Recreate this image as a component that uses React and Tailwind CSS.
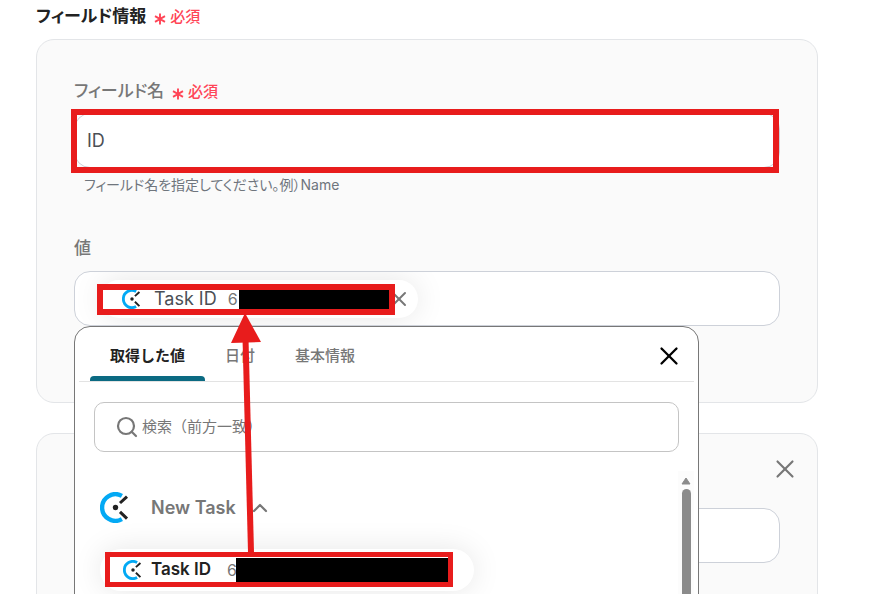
import { ChevronUp, Search, X } from "lucide-react";

function ClockLogo({ className }) {
  return (
    <svg viewBox="0 0 31 31" fill="none" className={className} aria-hidden="true">
      <path d="M21.9 3.9A13.3 13.3 0 1 0 21.9 27.1" stroke="#03a9f4" strokeWidth="4.4" />
      <circle cx="15.5" cy="15.5" r="2.7" fill="#222" />
      <path d="M20 11L27 4.6M20 19.8L27 26.6" stroke="#222" strokeWidth="3" />
    </svg>
  );
}

function Required() {
  return (
    <span className="flex items-center text-[15px] font-medium text-[#ff4557]">
      <svg viewBox="0 0 12 12" className="mt-1 mr-1 size-3" aria-hidden="true">
        <path d="M6 0.5V11.5M1 3.2L11 8.8M11 3.2L1 8.8" stroke="currentColor" strokeWidth="1.9" />
      </svg>
      必須
    </span>
  );
}

function Redacted({ className }) {
  return <span className={`shrink-0 bg-black ${className}`} />;
}

function Arrow() {
  return (
    <svg
      viewBox="0 0 40 240"
      className="pointer-events-none absolute -top-3.5 left-[150px] h-[240px] w-10"
      aria-hidden="true"
    >
      <path d="M20.5 25L26 239" stroke="#e81c1c" strokeWidth="6" />
      <path d="M20 0L6 30L36 29Z" fill="#e81c1c" />
    </svg>
  );
}

function ValuePicker() {
  return (
    <div
      role="dialog"
      aria-label="値"
      className="absolute top-[55px] left-0 z-10 h-[400px] w-[625px] rounded-t-[16px] border border-[#777] bg-white"
    >
      <div className="mx-1 flex h-[55px] items-center border-b border-[#e3e3e3] pr-2.5 pl-[11px]">
        <div role="tablist" className="flex h-full flex-1 text-[15px] font-medium text-[#777]">
          <button
            role="tab"
            aria-selected="true"
            className="relative h-full px-5 pt-1 font-bold text-[#222] after:absolute after:inset-x-0 after:bottom-0 after:h-[5px] after:rounded-t after:bg-[#0b6a82]"
          >
            取得した値
          </button>
          <button role="tab" aria-selected="false" className="h-full px-5 pt-1">
            日付
          </button>
          <button role="tab" aria-selected="false" className="h-full px-5 pt-1">
            基本情報
          </button>
        </div>
        <button aria-label="閉じる" className="pt-1 text-black">
          <X className="size-[30px]" strokeWidth={1.8} />
        </button>
      </div>

      <div className="mx-[19px] mt-5 flex h-[50px] items-center rounded-[10px] border border-[#c4c4c4] pl-5">
        <Search className="size-6 shrink-0 text-[#777]" strokeWidth={2.2} aria-hidden="true" />
        <input
          type="search"
          aria-label="検索"
          placeholder="検索（前方一致）"
          className="ml-[3px] min-w-0 flex-1 bg-transparent text-[15px] outline-none placeholder:text-[#777]"
        />
      </div>

      <div className="mt-[19px] flex h-[124px]">
        <div className="flex-1 overflow-hidden pl-[25px]">
          <button className="mt-[21px] flex items-center text-lg font-semibold text-[#777]">
            <ClockLogo className="size-[31px]" />
            <span className="ml-5">New Task</span>
            <ChevronUp className="ml-3 size-6" strokeWidth={2.2} aria-hidden="true" />
          </button>
          <button className="relative mt-[26px] flex h-[42px] w-[374px] items-center rounded-full bg-white pl-[23px] shadow-[0_0_30px_rgba(0,0,0,0.1)]">
            <ClockLogo className="size-5" />
            <span className="ml-2 text-[17px] font-semibold text-[#222]">Task ID</span>
            <span className="ml-4 w-[9px] text-base text-[#777]">6</span>
            <Redacted className="h-6 w-[212px]" />
            <span className="pointer-events-none absolute top-[3px] left-[5px] h-[35px] w-[348px] border-[5px] border-[#e81c1c]" />
          </button>
        </div>
        <div className="mr-1 flex w-4 flex-col items-center gap-1 bg-[#fcfcfc] pt-1.5">
          <svg viewBox="0 0 10 8" className="h-2 w-2.5" aria-hidden="true">
            <path d="M5 1L9 7H1Z" fill="#8b8b8b" stroke="#8b8b8b" strokeLinejoin="round" />
          </svg>
          <span className="w-[9px] flex-1 rounded-t-full bg-[#8b8b8b]" />
        </div>
      </div>
      <Arrow />
    </div>
  );
}

export default function App() {
  return (
    <main className="h-screen overflow-hidden bg-white pr-[68px] pl-9 font-[Inter,'Noto_Sans_CJK_JP',sans-serif]">
      <h2 className="flex h-[34px] items-center gap-2 text-[17px] font-bold text-[#222] [font-feature-settings:'palt']">
        フィールド情報
        <Required />
      </h2>

      <section className="mt-[5px] h-[364px] rounded-[18px] border border-[#e3e5e8] bg-[#fafafa] px-[37px] pt-[39px]">
        <div className="flex h-[26px] items-center gap-2 [font-feature-settings:'palt']">
          <label htmlFor="field-name" className="text-[17px] font-medium text-[#777]">
            フィールド名
          </label>
          <Required />
        </div>
        <div className="relative mt-2">
          <input
            id="field-name"
            defaultValue="ID"
            className="block h-[55px] w-full rounded-[16px] border border-[#cdd1d9] bg-white px-3 text-lg text-[#4b4f55] outline-none"
          />
          <span className="pointer-events-none absolute -top-1 right-px -bottom-[5px] -left-[3px] border-[6px] border-[#e81c1c]" />
        </div>
        <p className="mt-1.5 pl-2.5 text-sm leading-[22px] text-[#6f757d] [font-feature-settings:'palt']">
          フィールド名を指定してください。例）Name
        </p>

        <h3 className="mt-10 h-6 text-[17px] leading-6 font-medium text-[#777]">値</h3>
        <div className="relative mt-[11px] h-[55px]">
          <div className="flex h-full items-center overflow-hidden rounded-[16px] border border-[#cdd1d9] bg-white pl-[25px]">
            <div className="relative flex h-[38px] w-[318px] items-center rounded-full bg-white pl-[22px] shadow-[0_0_30px_rgba(0,0,0,0.1)]">
              <ClockLogo className="size-5" />
              <span className="ml-3 text-lg text-[#4b4f55]">Task ID</span>
              <span className="ml-[11px] w-[11px] text-base text-[#777]">6</span>
              <Redacted className="h-5 w-[150px]" />
              <button aria-label="削除" className="-ml-0.5 shrink-0 text-[#777]">
                <X className="size-6" strokeWidth={2} />
              </button>
              <span className="pointer-events-none absolute top-1 -left-[3px] h-[31px] w-[298px] border-[6px] border-[#e81c1c]" />
            </div>
          </div>
          <ValuePicker />
        </div>
      </section>

      <section className="mt-[30px] h-[300px] rounded-[18px] border border-[#e3e5e8] bg-[#fafafa] px-[37px] pt-5">
        <div className="-mr-5 flex justify-end">
          <button aria-label="閉じる" className="text-[#777]">
            <X className="size-[30px]" strokeWidth={1.7} />
          </button>
        </div>
        <input
          aria-label="フィールド名"
          className="mt-6 block h-[55px] w-full rounded-[16px] border border-[#cdd1d9] bg-white px-3 text-lg outline-none"
        />
      </section>
    </main>
  );
}
